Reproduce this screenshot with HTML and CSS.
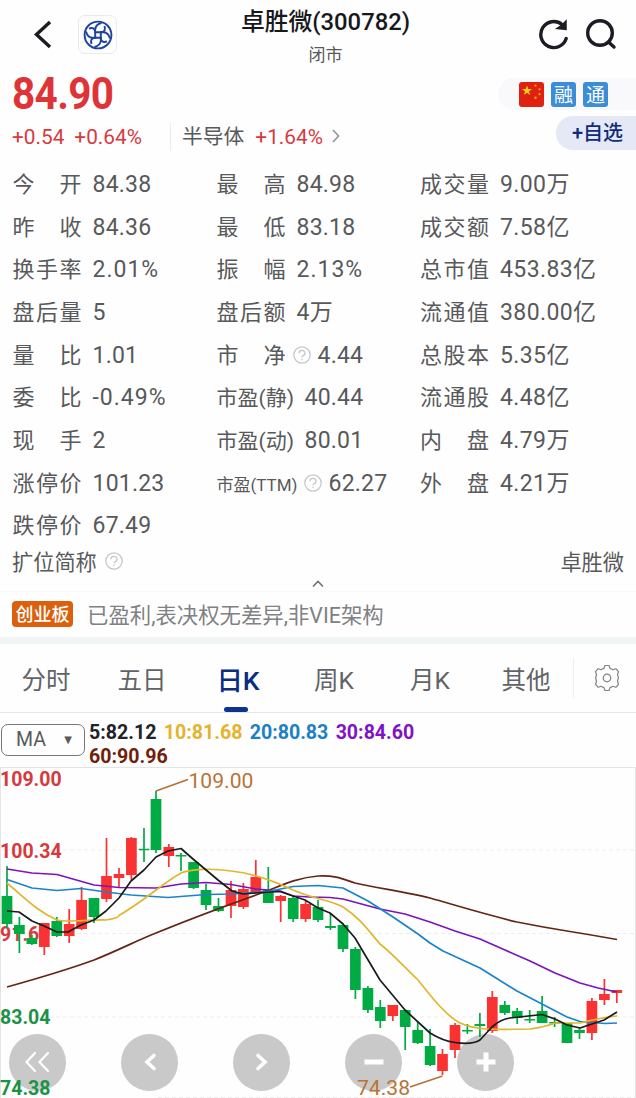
FILE: index.html
```
<!DOCTYPE html>
<html lang="zh-CN">
<head>
    <meta charset="UTF-8">
    <meta name="viewport" content="width=device-width, initial-scale=1.0">
    <title>卓胜微(300782)</title>
    <link rel="stylesheet" href="styles.css">
</head>
<body>

<header class="top">
    <div class="top-left">
        <svg class="back" width="20" height="32" viewBox="0 0 20 32"><path d="M17 3 3.500 15.500 17 28"/></svg>
        <div class="broker">
            <svg width="30" height="30" viewBox="0 0 30 30">
                <circle cx="15" cy="15" r="13.400"/>
                <g id="arm">
                    <path d="M12.200 19V9.500Q12.500 4.500 18.500 3"/>
                    <path d="M12.200 11Q11 7 6 8.500"/>
                </g>
                <use href="#arm" transform="rotate(90 15 15)"/>
                <use href="#arm" transform="rotate(180 15 15)"/>
                <use href="#arm" transform="rotate(270 15 15)"/>
            </svg>
        </div>
    </div>
    <div class="title">
        <h1>卓胜微(300782)</h1>
        <p>闭市</p>
    </div>
    <div class="top-right">
        <svg width="32" height="34" viewBox="0 0 32 34">
            <path d="M28.200 20.500A13 13 0 1 1 24 6.500"/>
            <path class="tip" d="M28 3V11.500L19 10.500 24 7z"/>
        </svg>
        <svg width="32" height="34" viewBox="0 0 32 34">
            <circle cx="15" cy="15" r="12.300"/>
            <path d="m23.500 24 5.500 5"/>
        </svg>
    </div>
</header>

<section class="quote">
    <div class="price-row">
        <strong class="price">84.90</strong>
        <div class="badges">
            <svg width="25" height="25" viewBox="0 0 25 25">
                <rect width="25" height="25" rx="3" fill="#de2110"/>
                <path fill="#ffd21a" d="m8 3.500 1.200 3.600H13l-3.100 2.300 1.200 3.600L8 10.800 4.900 13l1.200-3.600L3 7.100h3.800z"/>
                <g fill="#f5a020"><circle cx="16.500" cy="3.700" r="1.100"/><circle cx="20.500" cy="7.300" r="1.100"/><circle cx="20.500" cy="12.200" r="1.100"/><circle cx="16.500" cy="15.700" r="1.200"/></g>
            </svg>
            <span class="badge">融</span>
            <span class="badge">通</span>
            <svg width="6" height="20" viewBox="0 0 6 20" fill="#9899a8"><circle cx="3" cy="2.500" r="1.500"/><circle cx="3" cy="10" r="1.500"/><circle cx="3" cy="17.500" r="1.500"/></svg>
        </div>
    </div>
    <div class="change-row">
        <span class="change">+0.54</span>
        <span class="change">+0.64%</span>
        <div class="sector">
            <span>半导体</span>
            <span class="rise">+1.64%</span>
            <svg width="10" height="16" viewBox="0 0 10 16"><path d="m2 2 5.500 6L2 14"/></svg>
        </div>
        <button class="add">+自选</button>
    </div>
</section>

<section class="stats">
    <div class="stat"><span class="label">今开</span>84.38</div>
    <div class="stat"><span class="label">最高</span>84.98</div>
    <div class="stat"><span class="label">成交量</span>9.00万</div>

    <div class="stat"><span class="label">昨收</span>84.36</div>
    <div class="stat"><span class="label">最低</span>83.18</div>
    <div class="stat"><span class="label">成交额</span>7.58亿</div>

    <div class="stat percent"><span class="label">换手率</span>2.01%</div>
    <div class="stat percent"><span class="label">振幅</span>2.13%</div>
    <div class="stat"><span class="label">总市值</span>453.83亿</div>

    <div class="stat"><span class="label">盘后量</span>5</div>
    <div class="stat"><span class="label">盘后额</span>4万</div>
    <div class="stat"><span class="label">流通值</span>380.00亿</div>

    <div class="stat"><span class="label">量比</span>1.01</div>
    <div class="stat tight"><span class="label">市净</span><svg class="help" viewBox="0 0 18 18"><circle cx="9" cy="9" r="8.200"/><path d="M6 7.200a3 2.700 0 1 1 4.200 2.400Q9 10.200 9 11.200M9 12.600v1.300"/></svg>4.44</div>
    <div class="stat"><span class="label">总股本</span>5.35亿</div>

    <div class="stat percent"><span class="label">委比</span>-0.49%</div>
    <div class="stat"><span class="label pe">市盈(静)</span>40.44</div>
    <div class="stat"><span class="label">流通股</span>4.48亿</div>

    <div class="stat"><span class="label">现手</span>2</div>
    <div class="stat"><span class="label pe">市盈(动)</span>80.01</div>
    <div class="stat"><span class="label">内盘</span>4.79万</div>

    <div class="stat"><span class="label">涨停价</span>101.23</div>
    <div class="stat tight"><span class="label ttm">市盈(TTM)</span><svg class="help" viewBox="0 0 18 18"><circle cx="9" cy="9" r="8.200"/><path d="M6 7.200a3 2.700 0 1 1 4.200 2.400Q9 10.200 9 11.200M9 12.600v1.300"/></svg>62.27</div>
    <div class="stat"><span class="label">外盘</span>4.21万</div>

    <div class="stat"><span class="label">跌停价</span>67.49</div>
</section>

<div class="full-name">
    <span>扩位简称</span>
    <svg class="help" viewBox="0 0 18 18"><circle cx="9" cy="9" r="8.200"/><path d="M6 7.200a3 2.700 0 1 1 4.200 2.400Q9 10.200 9 11.200M9 12.600v1.300"/></svg>
    <span class="company">卓胜微</span>
</div>
<div class="collapse">
    <svg width="14" height="9" viewBox="0 0 14 9"><path d="m2 7.500 5-5 5 5"/></svg>
</div>

<div class="board">
    <span class="board-tag">创业板</span>
    <span>已盈利,表决权无差异,非VIE架构</span>
</div>

<nav class="tabs">
    <a class="tab">分时</a>
    <a class="tab">五日</a>
    <a class="tab active">日K</a>
    <a class="tab">周K</a>
    <a class="tab">月K</a>
    <a class="tab">其他</a>
    <div class="settings">
        <svg width="28" height="30" viewBox="-14 -15 28 30">
            <path d="M-2-12.500h4l1 2.800q1.700.5 3 1.400l2.800-1 2.700 3-1 2.800q.7 1.600.8 3.500l-.8 3.500 1 2.800-2.700 3-2.800-1q-1.300.9-3 1.400l-1 2.800h-4l-1-2.800q-1.700-.5-3-1.400l-2.800 1-2.700-3 1-2.800-.8-3.500.8-3.500-1-2.800 2.700-3 2.800 1q1.300-.9 3-1.400z"/>
            <circle r="3.800"/>
        </svg>
    </div>
</nav>

<div class="averages">
    <div class="select"><span>MA</span><span class="caret">▼</span></div>
    <div class="ma-list">
        <span class="ma5">5:82.12</span>
        <span class="ma10">10:81.68</span>
        <span class="ma20">20:80.83</span>
        <span class="ma30">30:84.60</span>
        <span class="ma60">60:90.96</span>
    </div>
</div>

<div class="chart">
    <div class="controls">
        <button><svg width="30" height="24" viewBox="-15 -12 30 24" class="thin"><path d="M-3-9-11.500 0-3 9M10-9 1.500 0 10 9"/></svg></button>
        <button><svg width="30" height="24" viewBox="-15 -12 30 24"><path d="m4-6.500L-3 0l7 6.500"/></svg></button>
        <button><svg width="30" height="24" viewBox="-15 -12 30 24"><path d="M-4-6.500 3 0l-7 6.500"/></svg></button>
        <button><svg width="30" height="24" viewBox="-15 -12 30 24"><path class="bar" d="M-9.500 0h19"/></svg></button>
        <button><svg width="30" height="24" viewBox="-15 -12 30 24"><path class="bar" d="M-9.500 0h19M0-9.500v19"/></svg></button>
    </div>
    <!-- y runs from 767 to 1098 so it lines up with the page -->
    <svg class="kline" width="636" height="331" viewBox="0 767 636 331">
        <path class="frame" d="M.5 1098V767.500H635.500V1098"/>
        <path class="grid" d="M0 850H636M0 933.500H636M0 1017H636M158 1097.500H636"/>

        <text class="axis up" x="0" y="786">109.00</text>
        <text class="axis up" x="0" y="858">100.34</text>
        <text class="axis up" x="0" y="941">91.69</text>
        <text class="axis down" x="0" y="1024">83.04</text>
        <text class="axis down" x="0" y="1095">74.38</text>

        <!-- falling candles: wicks, then bodies -->
        <path class="wick down" d="M7 866V928M19.400 917V953M31.900 935V945M56.800 917V937M94 898V923M144 828V862M156 791V853M181 853V871M193.600 862V889M206 884V910M218.500 898V912M268.300 867V903M293.200 896V922M318 900V922M330.500 913V930M343 923V952M355.400 947V999M367.900 986V1013M380.300 1000V1028M405.200 1010V1050M417.700 1022V1044M430.100 1029V1066M467.400 1024V1034M479.900 1013V1037M504.800 1001V1015M517.200 1008V1024M529.700 1010V1023M542.100 996V1023M554.600 1017V1027M579.500 1027V1039"/>
        <path class="body down" d="M7 896V924M19.400 925V934M31.900 938V944M56.800 921V936M94 898V917M144 848.700V850.200M156 799V850M181 855V856.500M193.600 862V888M206 890V905M218.500 906V911M268.300 890V903M293.200 898V919M318 907V920M330.500 926V928M343 925V949M355.400 949V990M367.900 988V1010M380.300 1007V1021M405.200 1010V1027M417.700 1030V1043M430.100 1046V1065M467.400 1030V1031.500M479.900 1024V1026M504.800 1005V1013M517.200 1011V1018M529.700 1019V1020.500M542.100 1011V1023M554.600 1022V1023.500M567 1023V1043M579.500 1030V1033"/>

        <!-- rising candles -->
        <path class="wick up" d="M44.300 923V955M69.200 909V943M81.600 887V930M106.500 838V902M119 868V888M131.400 837V880M168.800 844V867M231 881V918M243.400 883V909M255.800 860V893M280.700 895V922M305.600 901V922M392.800 1005V1021M442.500 1049V1075M455 1023V1058M492.300 991V1033M591.900 998V1040M604.400 979V1005M616.800 990V1003"/>
        <path class="body up" d="M44.300 923V947M69.200 924V936M81.600 900V929M106.500 876V899M119 874V878M131.400 838V875M168.800 847V856M231 890V906M243.400 889V907M255.800 877V892M280.700 896V901M305.600 904V919M392.800 1005V1016M442.500 1054V1071M455 1025V1050M492.300 997V1031M591.900 1001V1033M604.400 994V1000M616.800 990V993"/>

        <!-- moving averages -->
        <path class="line ma60" d="M7 987C32 980 64 971 94 960C119 950 138 940 156 933C190 919 228 905 256 895C275 889 293 878 318 876C337 875 345 880 355 883C377 888 405 892 430 898C455 905 480 913 517 922Q542 927 567 931Q592 935 617 939.500"/>
        <path class="line ma30" d="M7 869 32 873 57 874.500 94 885 119 887.500 156 888 181 884 206 882.500 231 884.500 256 889 280 891 293 896 310 897 330 897.500 343 899 380 909 405 914 430 922 455 931 480 939 505 950 530 961 555 973 580 983 598 988 617 992"/>
        <path class="line ma20" d="M7 879.500 32 888 57 890.500 81 888.500 106 892 131 895 168 897.500 206 894.500 231 894 268 891.500 293 886.500 318 885.500 343 888 368 901 393 917 418 934 430 943 443 951 480 968 517 991 542 1004 567 1017 580 1021.500 605 1023.500 617 1023"/>
        <path class="line ma10" d="M7 883C26 899 37 911 57 920C69 923 94 919 106 920Q119 918 119 915.500C144 901 163 883 181 873C191 869 212 868 231 871C251 873 268 878 293 890C313 899 331 900 343 907C360 918 368 930 380 944C393 954 405 968 418 980C430 995 445 1015 460 1023C480 1032 505 1029 530 1029Q545 1027 555 1023H580C592 1020 604 1017 617 1016"/>
        <path class="line ma5" d="M7 911 19 912 32 921 44 926 57 932 68 932 81 925 94 920 106 911 119 898 131 881 144 870 156 857 168 851 181 848.500 193 859 218 880 232 891 243 894 256 893 280 891.500 305 900 318 908 330 913 343 924 355 938 380 980 405 1010 430 1033Q443 1041 455 1042.500Q472 1045 480 1040L492 1027Q501 1019 510 1018L542 1014.500 555 1019 567 1025 580 1028 592 1024 604 1020 617 1012"/>

        <path class="leader" d="M156 791 188 779.500M410 1087 442.500 1076"/>
        <text class="mark" x="188.500" y="788">109.00</text>
        <text class="mark" x="357" y="1095">74.38</text>
    </svg>
</div>

</body>
</html>
```
FILE: styles.css
```
* {
    box-sizing: border-box;
}

body {
    width: 636px;
    height: 1098px;
    margin: 0;
    overflow: hidden;
    background-color: #fefefe;
    color: #58595b;
    font-family: Roboto, "Noto Sans CJK SC", sans-serif;
    font-size: 22px;
}

svg {
    fill: none;
    flex: none;
}

button {
    border: 0;
    padding: 0;
    font-family: inherit;
}

/* Header */
.top {
    display: grid;
    grid-template-columns: 200px 251px 1fr;
    height: 71px;
}

.top-left {
    display: flex;
    align-items: center;
    gap: 25px;
    height: 69px;
    padding-left: 33px;
}

.back path {
    stroke: #1b1c20;
    stroke-width: 3.4;
}

.broker {
    display: flex;
    align-items: center;
    justify-content: center;
    width: 39px;
    height: 39px;
    border: 1px solid #e9eaf0;
    border-radius: 7px;
}

.broker svg {
    stroke: #1d439c;
    stroke-width: 1.9;
}

.title {
    text-align: center;
}

.title h1 {
    margin: 5px 0 0;
    color: #17181c;
    font-size: 23.8px;
    font-weight: 500;
    line-height: 34px;
}

.title p {
    margin: 5px 0 0;
    font-size: 17px;
    line-height: 22px;
}

.top-right {
    display: flex;
    align-items: center;
    gap: 15px;
    height: 70px;
    padding-left: 87px;
}

.top-right svg {
    stroke: #1c1d24;
    stroke-width: 3.4;
    stroke-linecap: round;
}

.top-right .tip {
    fill: #1c1d24;
    stroke-width: 1.5;
}

/* Price */
.price-row {
    display: flex;
    align-items: center;
    justify-content: space-between;
    height: 46px;
    padding-left: 12px;
}

.price {
    color: #de3437;
    font-size: 44px;
    font-weight: 700;
    letter-spacing: -0.7px;
    line-height: 46px;
    transform: scaleX(0.92);
    transform-origin: left;
}

.badges {
    display: flex;
    align-items: center;
    gap: 7px;
    width: 138px;
    height: 32px;
    padding-left: 21px;
    border-radius: 16px 0 0 16px;
    background-color: #f9f9fb;
}

.badge {
    width: 25px;
    height: 25px;
    border-radius: 3px;
    background-color: #3a8dd6;
    color: #fff;
    font-family: "Noto Sans CJK SC", sans-serif;
    font-size: 19px;
    line-height: 24px;
    text-align: center;
}

.badges svg:last-child {
    margin-left: 4px;
}

.change-row {
    display: flex;
    align-items: center;
    height: 40px;
    padding-left: 12px;
    font-size: 20.8px;
    line-height: 28px;
}

.change,
.rise {
    color: #d63a3e;
}

.change {
    margin-right: 10px;
}

.sector {
    display: flex;
    align-items: baseline;
    height: 28px;
    margin-left: 18px;
    padding-left: 11px;
    border-left: 1px solid #ececee;
}

.sector .rise {
    margin-left: 11px;
}

.sector svg {
    align-self: center;
    margin: -3px 0 0 8px;
    stroke: #999;
    stroke-width: 1.8;
}

.add {
    width: 80px;
    height: 34px;
    margin: -9px 0 0 auto;
    padding-left: 3px;
    border-radius: 17px 0 0 17px;
    background-color: #e5e9f5;
    color: #102a7c;
    font-size: 20px;
    font-weight: 500;
    line-height: 34px;
}

/* Stats table */
.stats {
    display: grid;
    grid-template-columns: 204px 203.5px 1fr;
    grid-auto-rows: 42.67px;
    margin-top: 7px;
    padding-left: 12.5px;
}

.stat {
    display: flex;
    align-items: baseline;
    gap: 11px;
    font-size: 23px;
    letter-spacing: 0.2px;
    line-height: 42.67px;
    white-space: nowrap;
}

.stat:nth-child(3n) {
    letter-spacing: 0.4px;
}

.percent {
    letter-spacing: 1px;
}

.label {
    width: 69px;
    font-size: 22px;
    letter-spacing: 0;
    text-align: justify;
    text-align-last: justify;
}

.label.pe {
    width: 77px;
    font-size: 21px;
}

.label.ttm {
    width: 80px;
    font-size: 17px;
}

.tight {
    gap: 7px;
}

.help {
    align-self: center;
    width: 18px;
    height: 18px;
    margin-top: -2px;
    stroke: #c4c5c8;
    stroke-width: 1.2;
}

.full-name {
    display: flex;
    align-items: center;
    gap: 8px;
    height: 30px;
    padding: 0 12px 4px;
    font-size: 21.2px;
}

.full-name .help {
    margin: 0;
}

.company {
    margin-left: auto;
}

.collapse {
    display: flex;
    justify-content: center;
    height: 14px;
    padding-top: 1px;
    border-bottom: 1px solid #f8f8f9;
}

.collapse svg {
    stroke: #707174;
    stroke-width: 1.6;
}

.board {
    display: flex;
    align-items: center;
    gap: 14px;
    height: 45px;
    padding: 0 0 1px 12px;
    color: #808184;
    font-size: 21.4px;
}

.board-tag {
    width: 61px;
    height: 26px;
    border-radius: 4px;
    background-color: #dc5f0d;
    color: #fff;
    font-family: "Noto Sans CJK SC", sans-serif;
    font-size: 18px;
    font-weight: 500;
    line-height: 25px;
    text-align: center;
}

/* Period tabs */
.tabs {
    display: flex;
    height: 76px;
    padding-top: 8px;
    border-top: 7px solid #f2f5f6;
    border-bottom: 1px solid #e6e7ea;
}

.tab {
    display: flex;
    flex-direction: column;
    align-items: center;
    width: 96px;
    padding-right: 4px;
    color: #626366;
    font-size: 24.5px;
    line-height: 57px;
}

.active {
    color: #0b2c82;
    font-size: 26.5px;
    font-weight: 500;
}

.active::after {
    content: "";
    width: 24px;
    height: 6px;
    margin: -2px 4px 0 0;
    border-radius: 3px;
    background-color: #0d3290;
}

.settings {
    display: flex;
    align-items: center;
    justify-content: center;
    flex: 1;
    height: 40px;
    margin: 6px 0 0 -3px;
    padding-left: 3px;
    border-left: 1px solid #efeff2;
}

.settings svg {
    stroke: #808285;
    stroke-width: 1.2;
    stroke-linejoin: round;
}

/* Moving average legend */
.averages {
    display: flex;
    gap: 4px;
    height: 54px;
    padding: 8px 0 0 1px;
}

.select {
    display: flex;
    align-items: center;
    justify-content: space-between;
    width: 84px;
    height: 32px;
    margin-top: 3px;
    padding: 0 12px 0 14px;
    border: 1px solid #77787a;
    border-radius: 7px;
    font-size: 19.5px;
}

.caret {
    font-family: "DejaVu Sans", sans-serif;
    font-size: 10px;
}

.ma-list {
    display: flex;
    flex-wrap: wrap;
    align-content: flex-start;
    column-gap: 7.3px;
    width: 345px;
    font-size: 19.6px;
    font-weight: 700;
    line-height: 24px;
}

.ma5 { color: #222326; stroke: #1b1b1b; }
.ma10 { color: #e2b42f; stroke: #dfb72d; }
.ma20 { color: #1c80c7; stroke: #1b83ca; }
.ma30 { color: #8013c5; stroke: #7d14b8; }
.ma60 { color: #711f0c; stroke: #632615; }

/* Chart */
.chart {
    display: grid;
    height: 331px;
}

.controls,
.kline {
    grid-area: 1 / 1;
}

.kline {
    pointer-events: none;
}

.controls {
    display: flex;
    align-items: flex-end;
    gap: 55px;
    padding: 0 0 7px 9px;
}

.controls button {
    display: flex;
    align-items: center;
    justify-content: center;
    width: 57px;
    height: 57px;
    border-radius: 50%;
    background-color: #c9c9c9;
}

.controls svg {
    stroke: #fff;
    stroke-width: 3.6;
    stroke-linecap: round;
}

.controls .thin {
    stroke-width: 2.2;
}

.controls .bar {
    stroke-width: 5;
    stroke-linecap: butt;
}

.frame {
    stroke: #e3e4e6;
}

.grid {
    stroke: #ededf0;
    stroke-dasharray: 4 3;
}

.axis {
    font-size: 19.5px;
    font-weight: 700;
}

.axis.up { fill: #d63a3e; }
.axis.down { fill: #1c9148; }

.wick { stroke-width: 1.7; }
.body { stroke-width: 10.7; }

.wick.up, .body.up { stroke: #fa3232; }
.wick.down, .body.down { stroke: #00ab44; }

.line {
    stroke-width: 1.7;
    stroke-linejoin: round;
}

.leader {
    stroke: #b57032;
    stroke-width: 1.6;
}

.mark {
    fill: #b87336;
    font-size: 21.1px;
}
```
